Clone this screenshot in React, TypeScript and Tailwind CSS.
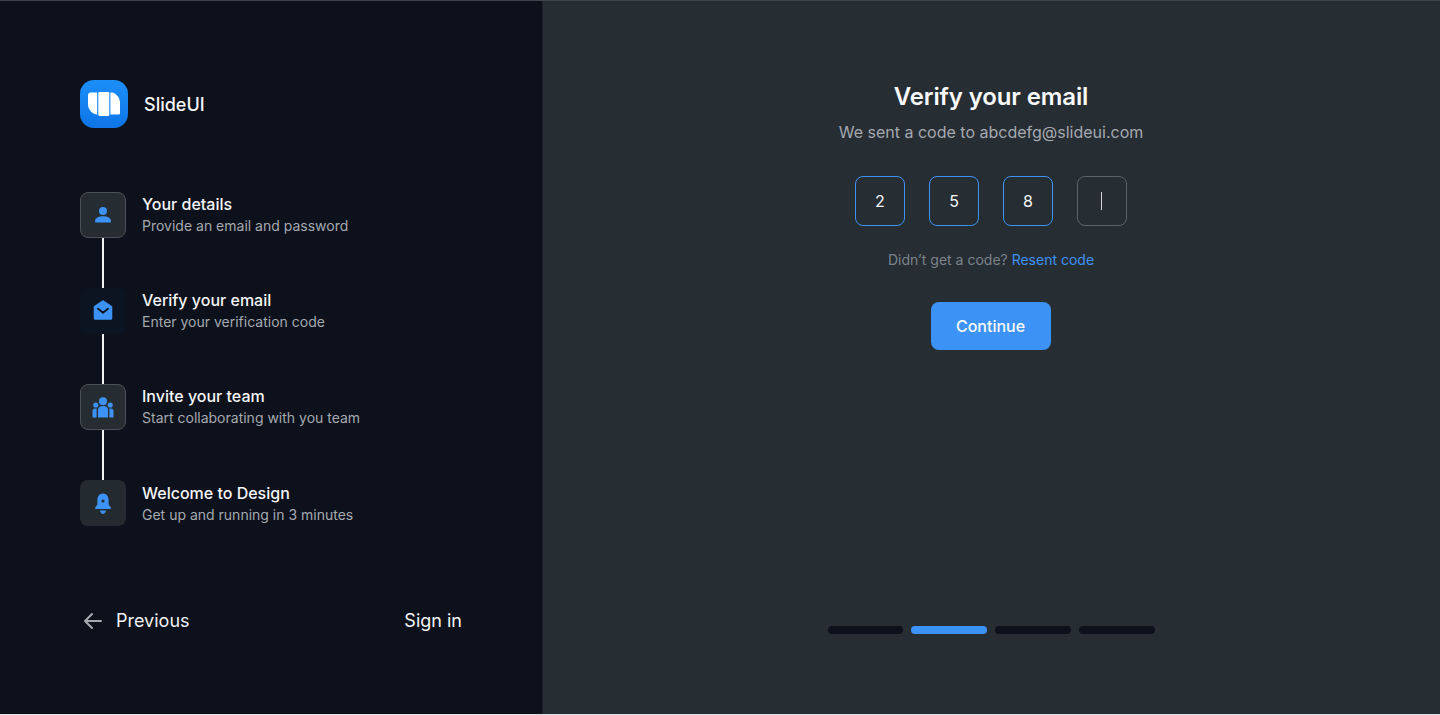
import React from "react";

const font = { fontFamily: "Inter, 'Liberation Sans', sans-serif" };

function Logo() {
  return (
    <div className="flex h-12 w-12 items-center justify-center rounded-[14px] bg-gradient-to-b from-[#1c8ff8] to-[#0f75e8]">
      <svg width="32" height="24" viewBox="0 0 32 24" fill="none">
        <path d="M0 3C0 1.4 1.2 .5 2.6 .5H9.2V22.5C4 22 0 17.5 0 12Z" fill="#fff" />
        <rect x="10.3" y="0" width="11" height="24" rx="1.2" fill="#fff" />
        <path d="M22.4 .5H24C28.5 1.5 32 5.8 32 11V21.5C32 22.2 31.4 22.5 30.8 22.5H22.4Z" fill="#fff" />
      </svg>
    </div>
  );
}

const IconUser = () => (
  <svg width="18" height="18" viewBox="0 0 18 18" fill="#3d93f5">
    <circle cx="9" cy="5" r="4" />
    <path d="M1 15.2C1 12 4.5 10.2 9 10.2S17 12 17 15.2C17 16 16.5 16.5 15.7 16.5H2.3C1.5 16.5 1 16 1 15.2Z" />
  </svg>
);

const IconMail = () => (
  <svg width="20" height="20" viewBox="0 0 22 22" fill="none" className="-translate-y-px">
    <path d="M10 .7C10.6 .2 11.4 .2 12 .7L21.2 7V20C21.2 21 20.4 21.7 19.5 21.7H2.5C1.6 21.7 .8 21 .8 20V7Z" fill="#3d93f5" />
    <path d="M5.5 9.5L11 14L16.5 9.5" stroke="#0b111c" strokeWidth="2" strokeLinecap="round" strokeLinejoin="round" />
  </svg>
);

const IconTeam = () => (
  <svg width="22" height="21" viewBox="0 0 22 21" fill="#3d93f5">
    <circle cx="11" cy="4.2" r="4" />
    <circle cx="3.8" cy="8" r="2.6" />
    <circle cx="18.2" cy="8" r="2.6" />
    <path d="M6 12.5C6 10.2 8 9 11 9S16 10.2 16 12.5V20.5H6Z" />
    <path d="M.5 14C.5 12.4 1.6 11.6 3 11.4H4.6V20.5H.5Z" />
    <path d="M21.5 14C21.5 12.4 20.4 11.6 19 11.4H17.4V20.5H21.5Z" />
  </svg>
);

const IconBell = () => (
  <svg width="18" height="22" viewBox="0 0 18 22" fill="none" className="translate-y-px">
    <path
      fillRule="evenodd"
      clipRule="evenodd"
      d="M9 .5C12.5 .5 14.6 3.4 14.6 7V11.5L16.6 14.2C17.2 15 16.7 16 15.7 16H2.3C1.3 16 .8 15 1.4 14.2L3.4 11.5V7C3.4 3.4 5.5 .5 9 .5ZM9 6.4A1.6 1.6 0 1 0 9 9.6A1.6 1.6 0 1 0 9 6.4Z"
      fill="#3d93f5"
    />
    <path d="M6 17.5H12C11.6 19.8 10.4 21 9 21S6.4 19.8 6 17.5Z" fill="#3d93f5" />
  </svg>
);

type StepProps = {
  icon: React.ReactNode;
  title: string;
  sub: string;
  kind: "border" | "active" | "plain";
  line: boolean;
  titleMt: string;
};

function Step({ icon, title, sub, kind, line, titleMt }: StepProps) {
  const boxClass =
    kind === "border"
      ? "border border-[#4b5257] bg-[#262d32]"
      : kind === "plain"
        ? "bg-[#242b30]"
        : "bg-[#0d1421]";
  return (
    <div className="flex h-24 gap-4">
      <div className="flex w-[46px] flex-col items-center">
        <div className={`flex h-[46px] w-[46px] shrink-0 items-center justify-center rounded-lg ${boxClass}`}>
          {icon}
        </div>
        {line && <div className="h-[50px] w-0.5 bg-[#f2f3f5]" />}
      </div>
      <div className={titleMt}>
        <div className="text-base leading-6 font-medium text-[#f5f6f7]">{title}</div>
        <div className="text-sm leading-5 text-[#a5a9b0]">{sub}</div>
      </div>
    </div>
  );
}

export default function App() {
  return (
    <div className="flex h-[715px] w-[1440px] flex-col overflow-hidden bg-[#dfe1e4]" style={font}>
      <div className="h-px bg-[#3c444c]" />
      <div className="flex h-[713px]">
        <aside className="flex w-[543px] flex-col border-r border-[#1c222b] bg-[#0c111b] pt-[79px] pr-20 pl-20">
          <div className="flex h-12 items-center gap-4">
            <Logo />
            <span className="translate-y-px text-lg font-medium text-[#f5f6f7]">SlideUI</span>
          </div>
          <div className="mt-16">
            <Step icon={<IconUser />} title="Your details" sub="Provide an email and password" kind="border" line titleMt="" />
            <Step icon={<IconMail />} title="Verify your email" sub="Enter your verification code" kind="active" line titleMt="" />
            <Step icon={<IconTeam />} title="Invite your team" sub="Start collaborating with you team" kind="border" line titleMt="" />
            <Step icon={<IconBell />} title="Welcome to Design" sub="Get up and running in 3 minutes" kind="plain" line={false} titleMt="mt-px" />
          </div>
          <div className="mt-[29px] flex h-8 items-center justify-between">
            <div className="flex items-center gap-3 pl-0.5 text-lg text-[#f0f1f3]">
              <svg width="22" height="22" viewBox="0 0 22 22" fill="none" stroke="#a5a9b0" strokeWidth="2" strokeLinecap="round" strokeLinejoin="round">
                <path d="M19 11H3M10 4L3 11L10 18" />
              </svg>
              <span>Previous</span>
            </div>
            <span className="text-lg text-[#f5f6f7]">Sign in</span>
          </div>
        </aside>
        <main className="flex flex-1 flex-col items-center bg-[#262d33] pt-20 pr-px">
          <h1 className="text-2xl leading-8 font-semibold tracking-[-0.12px] text-[#f8f9fa]">Verify your email</h1>
          <p className="mt-[7px] text-base leading-6 text-[#a5a9b0]">We sent a code to abcdefg@slideui.com</p>
          <div className="mt-8 flex gap-6">
            {["2", "5", "8"].map((d) => (
              <div key={d} className="flex h-[50px] w-[50px] items-center justify-center rounded-lg border border-[#3d93f5] text-base text-[#f5f6f7]">
                {d}
              </div>
            ))}
            <div className="flex h-[50px] w-[50px] items-center justify-center rounded-lg border border-[#5b6269]">
              <div className="h-[18px] w-px -translate-x-px bg-[#d0d3d6]" />
            </div>
          </div>
          <p className="mt-6 text-sm leading-5 text-[#7d838b]">
            Didn’t get a code? <span className="text-[#3d93f5]">Resent code</span>
          </p>
          <button className="mt-8 h-12 w-[120px] rounded-lg bg-[#3d93f5] pr-px text-base font-medium text-[#f8f9fa]">
            Continue
          </button>
          <div className="mt-[276px] flex gap-2 pl-px">
            <div className="h-2 w-[75px] rounded-full bg-[#0c111b]" />
            <div className="h-2 w-[76px] rounded-full bg-[#3d93f5]" />
            <div className="h-2 w-[76px] rounded-full bg-[#0c111b]" />
            <div className="h-2 w-[76px] rounded-full bg-[#0c111b]" />
          </div>
        </main>
      </div>
      <div className="h-px bg-[#dfe1e4]" />
    </div>
  );
}
